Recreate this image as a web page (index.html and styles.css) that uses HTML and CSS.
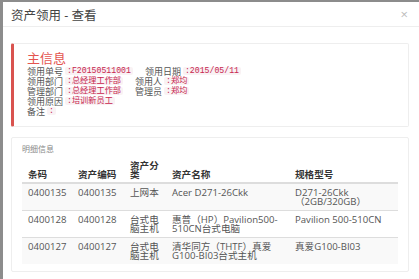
FILE: index.html
```html
<!DOCTYPE html>
<html lang="zh-CN">
<head>
    <meta charset="UTF-8">
    <title>资产领用 - 查看</title>
    <link rel="stylesheet" href="styles.css">
</head>
<body>

    <div class="modal">
        <div class="modal-header">
            <span class="modal-title">资产领用 - 查看</span>
            <span class="close">&times;</span>
        </div>

        <div class="modal-body">
            <div class="callout">
                <h4>主信息</h4>
                <p><span class="lbl">领用单号</span><code>:F20150511001</code><span class="lbl next">领用日期</span><code>:2015/05/11</code></p>
                <p><span class="lbl">领用部门</span><code>:总经理工作部</code><span class="lbl next">领用人</span><code>:郑均</code></p>
                <p><span class="lbl">管理部门</span><code>:总经理工作部</code><span class="lbl next">管理员</span><code>:郑均</code></p>
                <p><span class="lbl">领用原因</span><code>:培训新员工</code></p>
                <p><span class="lbl">备注</span><code>:</code></p>
            </div>

            <div class="panel">
                <div class="panel-title">明细信息</div>
                <table class="detail">
                    <colgroup>
                        <col style="width: 50px">
                        <col style="width: 52px">
                        <col style="width: 42px">
                        <col style="width: 123px">
                        <col>
                    </colgroup>
                    <thead>
                        <tr>
                            <th>条码</th>
                            <th>资产编码</th>
                            <th>资产分类</th>
                            <th>资产名称</th>
                            <th>规格型号</th>
                        </tr>
                    </thead>
                    <tbody>
                        <tr>
                            <td>0400135</td>
                            <td>0400135</td>
                            <td>上网本</td>
                            <td>Acer D271-26Ckk</td>
                            <td>D271-26Ckk （2GB/320GB）</td>
                        </tr>
                        <tr>
                            <td>0400128</td>
                            <td>0400128</td>
                            <td>台式电脑主机</td>
                            <td>惠普（HP）Pavilion500-510CN台式电脑</td>
                            <td>Pavilion 500-510CN</td>
                        </tr>
                        <tr>
                            <td>0400127</td>
                            <td>0400127</td>
                            <td>台式电脑主机</td>
                            <td>清华同方（THTF）真爱G100-BI03台式主机</td>
                            <td>真爱G100-BI03</td>
                        </tr>
                    </tbody>
                </table>
            </div>
        </div>
    </div>

</body>
</html>
```

FILE: styles.css
```css
body {
    margin: 0;
    background: #8c8c8c;
    font-family: "Open Sans", "Noto Sans CJK SC", sans-serif;
    color: #555;
    overflow: hidden;
}
.modal {
    margin: 2px 0 0 3px;
    background: #fff;
    height: 277px;
}
.modal-header {
    display: flex;
    justify-content: space-between;
    align-items: center;
    height: 24px;
    padding: 0 11px 0 8px;
    border-bottom: 1px solid #eee;
}
.modal-title {
    font-size: 12.5px;
    color: #444;
}
.close {
    font-size: 13px;
    color: #bbb;
}
.modal-body {
    padding: 16px 10px 0 8px;
}
.callout {
    border: 1px solid #eee;
    border-left: 3px solid #d9534f;
    border-radius: 2px;
    padding: 7px 10px 10px 13px;
}
.callout h4 {
    margin: 0 0 1px;
    height: 14px;
    font-size: 13px;
    line-height: 14px;
    font-weight: normal;
    color: #e4544f;
}
.callout p {
    display: flex;
    align-items: center;
    height: 10px;
    margin: 0;
    font-family: "Noto Sans CJK SC", sans-serif;
    font-size: 9px;
    white-space: nowrap;
}
.lbl {
    color: #555;
    margin-right: 2px;
}
.lbl.next {
    margin-left: 12px;
}
code {
    font-family: "Liberation Mono", "Noto Sans CJK SC", monospace;
    font-size: 8.2px;
    line-height: 8px;
    color: #c7254e;
    background: #f9f2f4;
    padding: 0 2px;
    border-radius: 2px;
}
.panel {
    margin-top: 10px;
    border: 1px solid #eee;
    border-radius: 2px;
    padding: 6px 10px 7px 10px;
}
.panel-title {
    font-family: "Noto Sans CJK SC", sans-serif;
    font-size: 8px;
    line-height: 10px;
    color: #888;
}
.detail {
    width: 100%;
    margin-top: 3px;
    border-collapse: collapse;
    table-layout: fixed;
    font-size: 9.6px;
    line-height: 9px;
}
.detail th {
    text-align: left;
    vertical-align: bottom;
    font-weight: bold;
    color: #333;
    padding: 4px 6px 3px;
    border-bottom: 2px solid #ddd;
}
.detail td {
    vertical-align: top;
    padding: 4px 6px 4px;
    border-top: 1px solid #ddd;
}
.detail tbody tr:first-child td {
    border-top: 0;
}
.detail tbody tr:nth-child(odd) {
    background: #f9f9f9;
}
```
